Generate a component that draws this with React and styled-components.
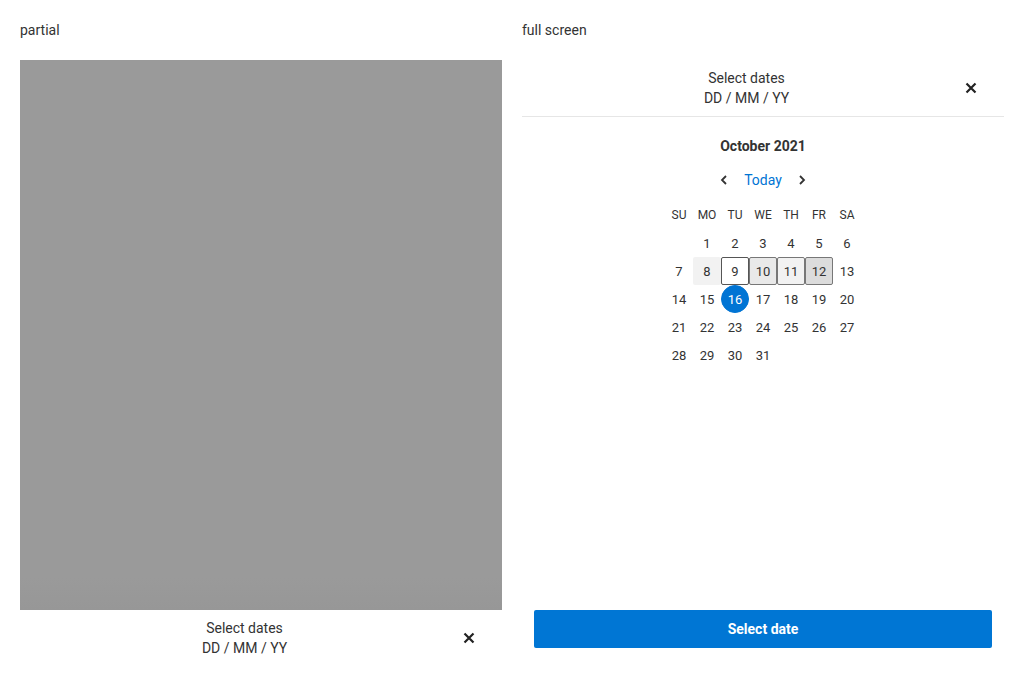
import React from "react";
import styled, { createGlobalStyle } from "styled-components";

const GlobalStyle = createGlobalStyle`
  html, body {
    margin: 0;
    padding: 0;
    background: #fff;
  }
  body {
    font-family: Roboto, "Liberation Sans", sans-serif;
    font-size: 14px;
    color: #333;
  }
`;

const Page = styled.div`
  box-sizing: border-box;
  height: 680px;
  padding: 20px;
  display: grid;
  grid-template-columns: 1fr 1fr;
  grid-template-rows: 640px;
  column-gap: 20px;
`;

const Column = styled.div`
  display: flex;
  flex-direction: column;
  min-width: 0;
  min-height: 0;
`;

const Label = styled.div`
  line-height: 20px;
  margin-bottom: 20px;
`;

const Backdrop = styled.div`
  height: 550px;
  flex-shrink: 0;
  background: linear-gradient(to bottom, #9a9a9a 0%, #9a9a9a 94%, #979797 100%);
`;

const Sheet = styled.div`
  flex: 1;
  display: flex;
  flex-direction: column;
`;

const Header = styled.div`
  flex-shrink: 0;
  display: flex;
  align-items: center;
  padding: 8px 15px 8px 18px;
  border-bottom: 1px solid ${({ $bordered }) => ($bordered ? "#e6e6e6" : "transparent")};
`;

const HeaderText = styled.div`
  flex: 1;
  text-align: center;
  line-height: 20px;
`;

const CloseButton = styled.button`
  width: 36px;
  height: 36px;
  border: 0;
  padding: 0;
  background: none;
  display: flex;
  align-items: center;
  justify-content: center;
  cursor: pointer;
  color: #222;
`;

const CalendarBody = styled.div`
  flex: 1;
  display: flex;
  flex-direction: column;
  align-items: center;
  padding-top: 19px;
`;

const MonthTitle = styled.div`
  font-weight: 700;
  line-height: 20px;
`;

const Nav = styled.div`
  display: flex;
  align-items: center;
  gap: 12px;
  height: 24px;
  margin-top: 12px;
`;

const NavArrow = styled.button`
  border: 0;
  background: none;
  padding: 0;
  width: 16px;
  height: 16px;
  display: flex;
  color: #333;
  cursor: pointer;
`;

const TodayLink = styled.span`
  color: #0074d4;
  line-height: 20px;
`;

const Grid = styled.div`
  margin-top: 9px;
  display: grid;
  grid-template-columns: repeat(7, 28px);
  grid-auto-rows: 28px;
`;

const WeekDay = styled.div`
  display: flex;
  align-items: center;
  justify-content: center;
  font-size: 12px;
  color: #333;
`;

const dayStyles = {
  plain: "background: transparent; border-color: transparent;",
  hover: "background: #f2f2f2; border-color: transparent;",
  focus: "background: #fff; border-color: #555;",
  rangeA: "background: #e9e9e9; border-color: #777;",
  rangeB: "background: #f2f2f2; border-color: #777;",
  rangeEnd: "background: #dcdcdc; border-color: #777;",
  selected: "background: #0074d4; color: #fff; border-radius: 50%; border-color: #0074d4;",
};

const Day = styled.div`
  box-sizing: border-box;
  display: flex;
  align-items: center;
  justify-content: center;
  font-size: 13px;
  border: 1px solid transparent;
  border-radius: 2px;
  ${({ $kind }) => dayStyles[$kind] || ""}
`;

const Footer = styled.div`
  flex-shrink: 0;
  padding: 0 12px 12px;
`;

const PrimaryButton = styled.button`
  width: 100%;
  height: 38px;
  border: 0;
  border-radius: 2px;
  background: #0076d4;
  color: #fff;
  font-family: Roboto, "Liberation Sans", sans-serif;
  font-size: 14px;
  font-weight: 700;
  cursor: pointer;
`;

const CloseIcon = () => (
  <svg width="12" height="12" viewBox="0 0 12 12">
    <path d="M1.5 1.5 L10.5 10.5 M10.5 1.5 L1.5 10.5" stroke="currentColor" strokeWidth="2.2" />
  </svg>
);

const Chevron = ({ dir }) => (
  <svg width="16" height="16" viewBox="0 0 16 16" fill="none">
    <path
      d={dir === "left" ? "M10 4 L6 8 L10 12" : "M6 4 L10 8 L6 12"}
      stroke="currentColor"
      strokeWidth="1.8"
    />
  </svg>
);

const DateHeader = ({ bordered }) => (
  <Header $bordered={bordered}>
    <HeaderText>
      <div>Select dates</div>
      <div>DD / MM / YY</div>
    </HeaderText>
    <CloseButton aria-label="Close">
      <CloseIcon />
    </CloseButton>
  </Header>
);

const weekDays = ["SU", "MO", "TU", "WE", "TH", "FR", "SA"];

const kindFor = (d) => {
  if (d === 8) return "hover";
  if (d === 9) return "focus";
  if (d === 10) return "rangeA";
  if (d === 11) return "rangeB";
  if (d === 12) return "rangeEnd";
  if (d === 16) return "selected";
  return "plain";
};

const Calendar = () => {
  const offset = 1;
  const cells = [];
  for (let i = 0; i < offset; i++) cells.push(<Day key={"e" + i} $kind="plain" />);
  for (let d = 1; d <= 31; d++)
    cells.push(
      <Day key={d} $kind={kindFor(d)}>
        {d}
      </Day>
    );
  return (
    <CalendarBody>
      <MonthTitle>October 2021</MonthTitle>
      <Nav>
        <NavArrow aria-label="Previous month">
          <Chevron dir="left" />
        </NavArrow>
        <TodayLink>Today</TodayLink>
        <NavArrow aria-label="Next month">
          <Chevron dir="right" />
        </NavArrow>
      </Nav>
      <Grid>
        {weekDays.map((w) => (
          <WeekDay key={w}>{w}</WeekDay>
        ))}
        {cells}
      </Grid>
    </CalendarBody>
  );
};

export default function App() {
  return (
    <>
      <GlobalStyle />
      <Page>
        <Column>
          <Label>partial</Label>
          <Backdrop />
          <DateHeader />
        </Column>
        <Column>
          <Label>full screen</Label>
          <Sheet>
            <DateHeader bordered />
            <Calendar />
            <Footer>
              <PrimaryButton>Select date</PrimaryButton>
            </Footer>
          </Sheet>
        </Column>
      </Page>
    </>
  );
}
